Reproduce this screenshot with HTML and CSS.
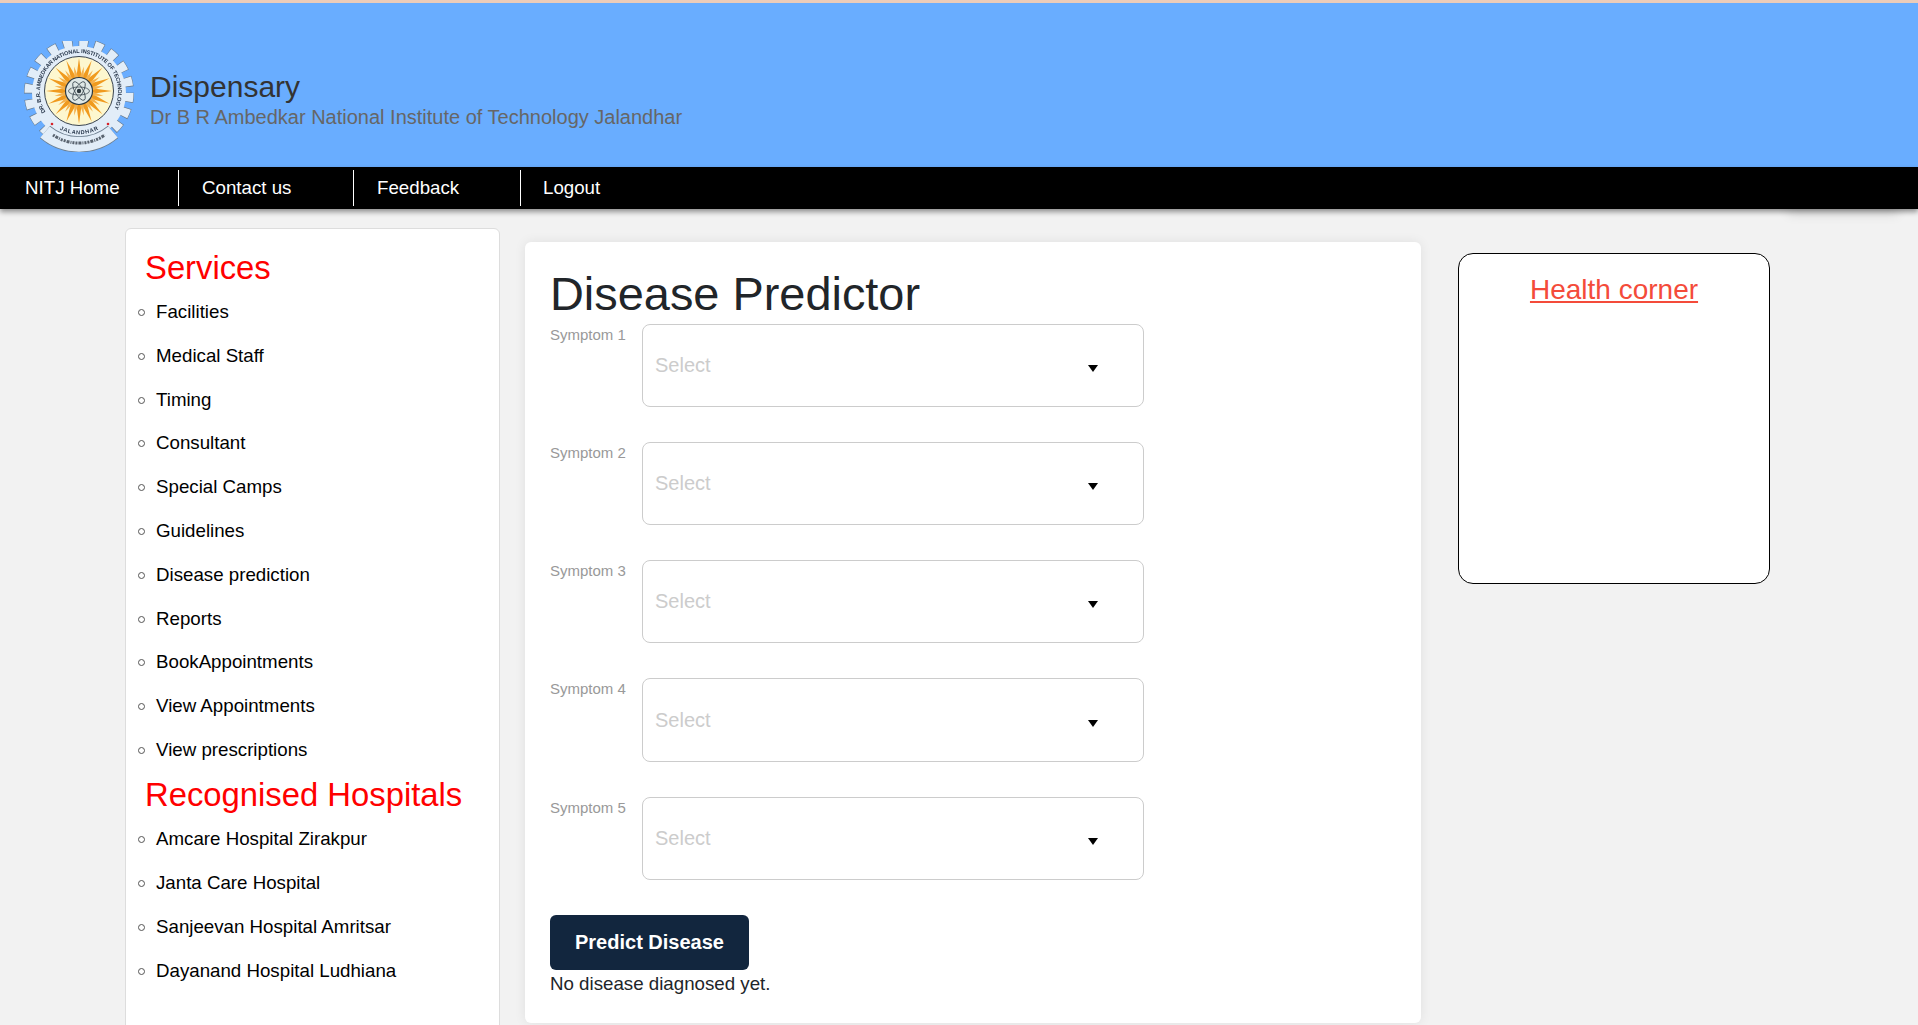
FILE: index.html
```html
<html>

<head>
    <meta http-equiv="Content-Type" content="text/html" charset="utf-8">
    <title>Dispensary - Disease Predictor</title>
    <link rel="stylesheet" href="styles.css">
</head>

<body>
    <div class="page">
        <div class="header">
            <svg class="logo" viewBox="0 0 111 111" width="111" height="111">
                <defs>
                    <polygon id="ray" points="-3,-11 0,-33 3,-11" fill="#f09a1e" />
                    <polygon id="ray-s" points="-2.4,-11 0,-25 2.4,-11" fill="#f5b04a" />
                    <g id="rays2"><use href="#ray" /><use href="#ray" transform="rotate(180)" /></g>
                    <g id="rays4"><use href="#rays2" /><use href="#rays2" transform="rotate(90)" /></g>
                    <g id="rays8"><use href="#rays4" /><use href="#rays4" transform="rotate(45)" /></g>
                    <g id="short2"><use href="#ray-s" /><use href="#ray-s" transform="rotate(180)" /></g>
                    <g id="short4"><use href="#short2" /><use href="#short2" transform="rotate(90)" /></g>
                    <g id="short8"><use href="#short4" /><use href="#short4" transform="rotate(45)" /></g>
                    <path id="band" d="M 21.5 71 A 39 39 0 1 1 88.5 71" />
                    <path id="city" d="M 33 87 A 42 42 0 0 0 77 87" />
                </defs>
                <!-- gear teeth + ring -->
                <circle cx="55" cy="52" r="50" fill="none" stroke="#66788a" stroke-width="10" stroke-dasharray="9.7 6" stroke-dashoffset=".6" />
                <circle cx="55" cy="52" r="50" fill="none" stroke="#e2edf8" stroke-width="9" stroke-dasharray="8.5 7.2" />
                <circle cx="55" cy="52" r="47" fill="#e2edf8" />
                <!-- bottom ribbon -->
                <path d="M 21 91 A 53 53 0 0 0 89 91" fill="none" stroke="#6d7f90" stroke-width="16" />
                <path d="M 21 91 A 53 53 0 0 0 89 91" fill="none" stroke="#e2edf8" stroke-width="14.6" />
                <path d="M 29 94 A 46 46 0 0 0 81 94" fill="none" stroke="#5a6470" stroke-width="3" stroke-dasharray="2 1 3 1 1 1 2 1" />
                <!-- sun -->
                <circle cx="55" cy="50" r="34.5" fill="#fdf7cf" stroke="#3a4450" stroke-width="1" />
                <g transform="translate(55 50)">
                    <use href="#rays8" />
                    <use href="#rays8" transform="rotate(22.5)" />
                    <use href="#short8" transform="rotate(11.25)" />
                    <use href="#short8" transform="rotate(33.75)" />
                    <circle r="13.5" fill="#dfe8e6" stroke="#2e3a40" stroke-width="1.2" />
                    <g fill="none" stroke="#3d4a52" stroke-width=".8">
                        <ellipse rx="10.5" ry="4" />
                        <ellipse rx="10.5" ry="4" transform="rotate(60)" />
                        <ellipse rx="10.5" ry="4" transform="rotate(120)" />
                    </g>
                    <circle r="2.2" fill="#2e3a40" />
                </g>
                <!-- lettering -->
                <text class="logo-text" fill="#27364a" textLength="160"><textPath href="#band">DR. B.R. AMBEDKAR NATIONAL INSTITUTE OF TECHNOLOGY</textPath></text>
                <text class="logo-text" fill="#27364a" textLength="40" dx="3"><textPath href="#city">JALANDHAR</textPath></text>
                <circle cx="28" cy="83" r="1.3" fill="#d8232a" />
                <circle cx="84" cy="83" r="1.3" fill="#d8232a" />
            </svg>
            <div class="brand">
                <div class="brand-name">Dispensary</div>
                <div class="brand-sub">Dr B R Ambedkar National Institute of Technology Jalandhar</div>
            </div>
        </div>

        <div class="nav">
            <a class="nav-item nav-home">NITJ Home</a>
            <a class="nav-item nav-contact">Contact us</a>
            <a class="nav-item nav-feedback">Feedback</a>
            <a class="nav-item nav-logout">Logout</a>
        </div>

        <div class="content">
            <div class="sidebar">
                <h2 class="side-title">Services</h2>
                <ul class="side-list">
                    <li>Facilities</li>
                    <li>Medical Staff</li>
                    <li>Timing</li>
                    <li>Consultant</li>
                    <li>Special Camps</li>
                    <li>Guidelines</li>
                    <li>Disease prediction</li>
                    <li>Reports</li>
                    <li>BookAppointments</li>
                    <li>View Appointments</li>
                    <li>View prescriptions</li>
                </ul>
                <h2 class="side-title">Recognised Hospitals</h2>
                <ul class="side-list">
                    <li>Amcare Hospital Zirakpur</li>
                    <li>Janta Care Hospital</li>
                    <li>Sanjeevan Hospital Amritsar</li>
                    <li>Dayanand Hospital Ludhiana</li>
                </ul>
            </div>

            <div class="main">
                <h1 class="main-title">Disease Predictor</h1>
                <div class="field">
                    <label class="field-label">Symptom 1</label>
                    <div class="select"><span>Select</span><i class="caret"></i></div>
                </div>
                <div class="field">
                    <label class="field-label">Symptom 2</label>
                    <div class="select"><span>Select</span><i class="caret"></i></div>
                </div>
                <div class="field">
                    <label class="field-label">Symptom 3</label>
                    <div class="select"><span>Select</span><i class="caret"></i></div>
                </div>
                <div class="field">
                    <label class="field-label">Symptom 4</label>
                    <div class="select select-tall"><span>Select</span><i class="caret"></i></div>
                </div>
                <div class="field">
                    <label class="field-label">Symptom 5</label>
                    <div class="select"><span>Select</span><i class="caret"></i></div>
                </div>
                <button class="predict">Predict Disease</button>
                <p class="result">No disease diagnosed yet.</p>
            </div>

            <div class="health">
                <a class="health-title">Health corner</a>
            </div>
        </div>
    </div>
</body>

</html>
```

FILE: styles.css
```css
body {
    margin: 0;
    background-color: #f2f2f2;
    font-family: "Liberation Sans", Arial, sans-serif;
}

.page {
    height: 100vh;
    overflow: hidden;
    border-top: 3px solid #ecccb9;
    box-sizing: border-box;
}

.header {
    display: flex;
    align-items: flex-start;
    gap: 15px;
    height: 164px;
    box-sizing: border-box;
    padding: 38px 0 0 24px;
    background-color: #69adff;
}

.logo {
    flex: none;
    filter: blur(.35px);
}

.logo-text {
    font-size: 5.6px;
    font-weight: bold;
}

.brand {
    padding-top: 28px;
}

.brand-name {
    font-size: 30px;
    line-height: 36px;
    color: #333;
}

.brand-sub {
    padding-top: 1px;
    font-size: 20px;
    line-height: 23px;
    color: #666;
}

.nav {
    position: relative;
    z-index: 1;
    display: flex;
    align-items: center;
    height: 42px;
    background-color: #000;
    box-shadow: 0 3px 5px rgba(0, 0, 0, .4);
}

/* faint extra shadow on the right side */
.nav::after {
    content: "";
    position: absolute;
    z-index: -1;
    right: 20px;
    bottom: 0;
    width: 110px;
    height: 10px;
    box-shadow: 0 5px 12px rgba(0, 0, 0, .12);
}

.nav-item {
    display: block;
    box-sizing: border-box;
    height: 36px;
    line-height: 36px;
    font-size: 18.72px;
    color: #fff;
    border-right: 1px solid #fff;
}

.nav-home {
    width: 179px;
    padding-left: 25px;
    line-height: 35px;
}

.nav-contact {
    width: 175px;
    padding-left: 23px;
}

.nav-feedback {
    width: 167px;
    padding-left: 23px;
}

.nav-logout {
    padding-left: 22px;
    border-right: 0;
}

.content {
    display: flex;
    align-items: flex-start;
    padding: 19px 0 0 125px;
}

.sidebar {
    width: 375px;
    height: 840px;
    box-sizing: border-box;
    padding: 18px 0 0 19px;
    background-color: #fff;
    border: 1px solid #ddd;
    border-radius: 6px;
}

.side-title {
    margin: 0 0 1px;
    font-size: 32.8px;
    font-weight: normal;
    line-height: 42px;
    color: #f00;
}

.side-list {
    margin: 0 0 2.5px -19px;
    padding-left: 30px;
    list-style: none;
    font-size: 18.72px;
    line-height: 43.8px;
    color: #000;
}

.side-list li {
    position: relative;
}

/* hollow bullet, the default marker comes out too small */
.side-list li::before {
    content: "";
    position: absolute;
    left: -18px;
    top: 19px;
    width: 5px;
    height: 5px;
    border: 1.2px solid #555;
    border-radius: 50%;
}

.main {
    width: 896px;
    height: 781px;
    box-sizing: border-box;
    margin: 14px 0 0 25px;
    padding: 0 25px;
    background-color: #fff;
    border-radius: 6px;
    box-shadow: 0 0 12px rgba(0, 0, 0, .08);
}

.main-title {
    margin: 0;
    padding-top: 23px;
    font-size: 46.9px;
    font-weight: normal;
    line-height: 59px;
    color: #212529;
}

.field {
    display: flex;
    margin-bottom: 35px;
}

.field-label {
    width: 92px;
    padding-top: 2px;
    font-size: 15px;
    line-height: 17px;
    color: #999;
}

.select {
    display: flex;
    justify-content: space-between;
    align-items: center;
    box-sizing: border-box;
    width: 502px;
    height: 83px;
    padding: 0 45px 0 12px;
    background-color: #fff;
    border: 1px solid #ccc;
    border-radius: 8px;
    font-size: 20px;
    color: #ccc;
}

.select-tall {
    height: 84px;
}

.caret {
    width: 0;
    height: 0;
    margin-top: 6px;
    border-left: 5px solid transparent;
    border-right: 5px solid transparent;
    border-top: 7px solid #000;
}

.predict {
    display: block;
    width: 199px;
    height: 55px;
    padding: 0;
    background-color: #12263e;
    border: 0;
    border-radius: 6px;
    font-family: inherit;
    font-size: 20px;
    font-weight: bold;
    color: #fff;
}

.result {
    margin: 2px 0 0;
    font-size: 18.72px;
    line-height: 24px;
    color: #212529;
}

.health {
    width: 312px;
    height: 331px;
    box-sizing: border-box;
    margin: 25px 0 0 37px;
    padding-top: 19px;
    background-color: #fff;
    border: 1px solid #000;
    border-radius: 15px;
    text-align: center;
}

.health-title {
    font-size: 28px;
    line-height: 34px;
    color: #f44b3a;
    text-decoration: underline;
}
```
